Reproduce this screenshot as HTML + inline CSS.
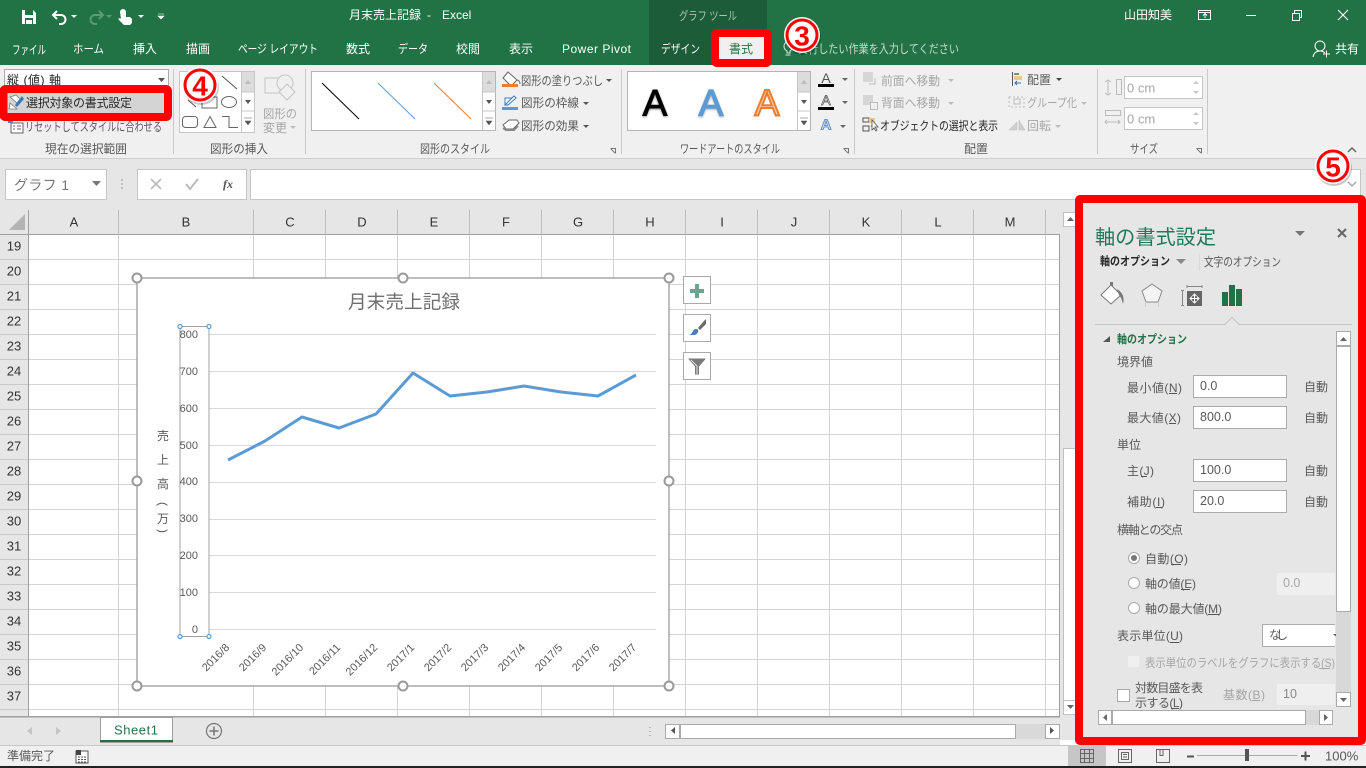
<!DOCTYPE html>
<html lang="ja"><head><meta charset="utf-8"><title>月末売上記録 - Excel</title>
<style>
html,body{margin:0;padding:0;width:1366px;height:768px;overflow:hidden;background:#fff}
svg{display:block}
text{font-family:"Liberation Sans","Noto Sans CJK JP",sans-serif;font-size:12px;dominant-baseline:central;fill:#444}
.w{fill:#fff}.g{fill:#a6a6a6}.t{fill:#595959}.d{fill:#262626}.h{fill:#217346}
.c{text-anchor:middle}
.n{font-size:13px;fill:#333}
.ic{fill:none;stroke:#666;stroke-width:1}
</style></head><body>
<svg width="1366" height="768" viewBox="0 0 1366 768" xmlns="http://www.w3.org/2000/svg">
<!-- title bar -->
<rect width="1366" height="65" fill="#217346"/>
<rect x="649" width="118" height="65" fill="#1d5c39"/>
<path d="M22 10h11l3 3v11H22z" fill="#fff"/><rect x="25" y="10" width="8" height="5" fill="#217346"/><rect x="25" y="18" width="8" height="6" fill="#217346"/><rect x="26" y="20" width="6" height="4" fill="#fff"/>
<path d="M57 11l-4 4 4 4M54 15h7a4 4 0 0 1 0 9h-2" fill="none" stroke="#fff" stroke-width="2"/><path d="M71 15h6l-3 3z" fill="#fff"/>
<path d="M99 11l4 4-4 4M102 15h-7a4 4 0 0 0 0 9h2" fill="none" stroke="#5f9a78" stroke-width="2"/><path d="M106 15h6l-3 3z" fill="#5f9a78"/>
<path d="M120 12a3 3 0 0 1 6 0v5h4l2 2v4l-2 2h-6l-6-6 2-1 1 1z" fill="#fff"/><path d="M138 15h6l-3 3z" fill="#fff"/>
<path d="M158 14h6M158 16h6l-3 3z" fill="#fff" stroke="#fff" stroke-width=".6"/>
<text x="349" y="15" class="w">月末売上記録</text><text x="427" y="15" class="w">-</text><text x="442" y="15" class="w">Excel</text>
<text x="679" y="16" style="fill:#a7c4b3" textLength="58" lengthAdjust="spacingAndGlyphs">グラフ ツール</text>
<text x="1124" y="15" class="w" textLength="48">山田知美</text>
<rect x="1198.500" y="10.500" width="12" height="9" fill="none" stroke="#fff"/><path d="M1199 12.500h12M1205 18v-4M1203 15.500l2-2 2 2" fill="none" stroke="#fff"/>
<path d="M1246 15.500h10" stroke="#fff"/>
<path d="M1292.500 13.500h7v7h-7zM1294.500 13v-2.500h7v7H1300" fill="none" stroke="#fff"/>
<path d="M1338 10l10 10M1348 10l-10 10" stroke="#fff" stroke-width="1.100"/>
<text x="12" y="50" class="w" textLength="34" lengthAdjust="spacingAndGlyphs">ファイル</text>
<text x="73" y="49" class="w" textLength="31" lengthAdjust="spacingAndGlyphs">ホーム</text>
<text x="133" y="49" class="w" textLength="24">挿入</text>
<text x="186" y="49" class="w" textLength="24">描画</text>
<text x="238" y="49" class="w" textLength="80" lengthAdjust="spacingAndGlyphs">ページ レイアウト</text>
<text x="346" y="49" class="w" textLength="24">数式</text>
<text x="398" y="49" class="w" textLength="30" lengthAdjust="spacingAndGlyphs">データ</text>
<text x="456" y="49" class="w" textLength="24">校閲</text>
<text x="509" y="49" class="w" textLength="24">表示</text>
<text x="562" y="49" class="w" textLength="69">Power Pivot</text>
<text x="661" y="49" class="w" textLength="39" lengthAdjust="spacingAndGlyphs">デザイン</text>
<!-- tell me -->
<path d="M787 53v-2c-2-1-3-3-3-5a4.500 4.500 0 0 1 9 0c0 2-1 4-3 5v2zM785.500 55h5" fill="none" stroke="#d9e6de"/>
<text x="798" y="49" style="fill:#c9dbd0" textLength="161" lengthAdjust="spacingAndGlyphs">実行したい作業を入力してください</text>
<circle cx="1320" cy="46" r="5" fill="none" stroke="#fff"/><path d="M1313 57c1-5 4-6 7-6s4 1 5 2M1323 54h7M1326.500 50.500v7" fill="none" stroke="#fff"/>
<text x="1335" y="49" class="w" textLength="24">共有</text>
<!-- ribbon -->
<rect y="65" width="1366" height="93" fill="#f0f0f0"/>
<rect y="158" width="1366" height="52" fill="#e6e6e6"/><rect y="158" width="1366" height="1" fill="#cfcfcf"/>
<path d="M173.500 69v85M305.500 69v85M621.500 69v85M854.500 69v85M1097.500 69v85M1207.500 69v85" stroke="#c8c8c8"/>
<!-- current selection -->
<rect x="4.500" y="69.500" width="164" height="19" fill="#fff" stroke="#ababab"/>
<text x="7" y="80" class="d" textLength="54">縦 (値) 軸</text><path d="M158 78h7l-3.500 4z" fill="#555"/>
<path d="M11 123h12v10H11z" fill="#fff" stroke="#666"/><path d="M13 126h2M17 126h4M13 129h2M17 129h4" stroke="#666"/><path d="M8 120h5v3H8z" fill="#4a86c0"/>
<text x="25" y="127" class="t" textLength="137" lengthAdjust="spacingAndGlyphs">リセットしてスタイルに合わせる</text>
<text x="86" y="149" class="t c" textLength="82" lengthAdjust="spacingAndGlyphs">現在の選択範囲</text>
<!-- shape gallery -->
<rect x="179.500" y="71.500" width="75" height="61" fill="#fff" stroke="#c6c6c6"/>
<rect x="241" y="72" width="13" height="20" fill="#dcdcdc"/><path d="M241.500 72v60M241 92h14M241 111h14" stroke="#c6c6c6"/>
<path d="M245 84h6l-3-4z" fill="#bbb"/><path d="M245 100h6l-3 4z" fill="#555"/><path d="M244 118h8M245 121h6l-3 4z" fill="#555" stroke="#555" stroke-width=".5"/>
<path d="M222 76l15 13M188 100l8 7" stroke="#555" fill="none"/><rect x="202" y="97" width="15" height="11" fill="none" stroke="#666"/><ellipse cx="229" cy="102" rx="7.500" ry="5.500" fill="none" stroke="#666"/>
<rect x="182.500" y="116.500" width="15" height="11" rx="3" fill="none" stroke="#666"/><path d="M204 127.500l6-11 6 11z" fill="none" stroke="#666"/><path d="M222 116.500h7v11h9" fill="none" stroke="#666"/>
<path d="M265 78h15v15h-15z" fill="#f0f0f0" stroke="#c4c4c4"/><circle cx="285" cy="83" r="8" fill="#f0f0f0" stroke="#c4c4c4"/><path d="M279 92l8-8 8 8-8 8z" fill="#f0f0f0" stroke="#c4c4c4"/>
<text x="263" y="114" class="g" textLength="34" lengthAdjust="spacingAndGlyphs">図形の</text><text x="263" y="128" class="g" textLength="24">変更</text><path d="M290 126h6l-3 3z" fill="#bbb"/>
<text x="239" y="149" class="t c" textLength="58" lengthAdjust="spacingAndGlyphs">図形の挿入</text>
<!-- shape styles -->
<rect x="311.500" y="71.500" width="184" height="59" fill="#fff" stroke="#b5b5b5"/>
<rect x="482" y="72" width="13" height="20" fill="#dcdcdc"/><path d="M482.500 72v58M482 92h14M482 111h14" stroke="#c6c6c6"/>
<path d="M486 84h6l-3-4z" fill="#bbb"/><path d="M486 100h6l-3 4z" fill="#555"/><path d="M485 118h8M486 121h6l-3 4z" fill="#555" stroke="#555" stroke-width=".5"/>
<path d="M322 83l37 36" stroke="#000"/><path d="M378 83l37 36" stroke="#5b9bd5"/><path d="M434 83l37 36" stroke="#ed7d31"/>
<path d="M508 72l9 8-6 6-8-8zM517 80c2 0 3 2 3 4" fill="#fff" stroke="#666"/><rect x="502" y="84" width="16" height="3" fill="#ed7d31"/>
<rect x="502" y="107" width="16" height="3" fill="#5b9bd5"/><path d="M505 105v-7h7M505 105l9-9 2 2-8 7z" fill="#fff" stroke="#3c79b5"/>
<path d="M503 125l6-5h8l2 3-6 6h-7z" fill="#fff" stroke="#666"/><path d="M503 128l3 2h8l4-4" fill="none" stroke="#888" stroke-width="2"/>
<text x="521" y="81" class="t" textLength="82" lengthAdjust="spacingAndGlyphs">図形の塗りつぶし</text><path d="M606 79h6l-3 3z" fill="#555"/>
<text x="521" y="103" class="t" textLength="58" lengthAdjust="spacingAndGlyphs">図形の枠線</text><path d="M583 102h6l-3 3z" fill="#555"/>
<text x="521" y="126" class="t" textLength="58" lengthAdjust="spacingAndGlyphs">図形の効果</text><path d="M583 125h6l-3 3z" fill="#555"/>
<text x="455" y="149" class="t c" textLength="70" lengthAdjust="spacingAndGlyphs">図形のスタイル</text>
<path d="M610.500 148.500h5v5M611 149l4 4" fill="none" stroke="#777"/>
<!-- wordart -->
<rect x="627.500" y="71.500" width="183" height="59" fill="#fff" stroke="#b5b5b5"/>
<rect x="797" y="72" width="13" height="20" fill="#dcdcdc"/><path d="M797.500 72v58M797 92h14M797 111h14" stroke="#c6c6c6"/>
<path d="M801 84h6l-3-4z" fill="#bbb"/><path d="M801 100h6l-3 4z" fill="#555"/><path d="M800 118h8M801 121h6l-3 4z" fill="#555" stroke="#555" stroke-width=".5"/>
<text x="655" y="103" class="c" style="font-size:37px;fill:#000;stroke:#000;stroke-width:1;filter:drop-shadow(0 1px 1px #999)">A</text>
<text x="711" y="103" class="c" style="font-size:37px;fill:#5b9bd5;stroke:#5b9bd5;stroke-width:1.200;filter:drop-shadow(0 1px 1px #aaa)">A</text>
<text x="767" y="103" class="c" style="font-size:37px;fill:#f6c8a8;stroke:#ed7d31;stroke-width:2">A</text>
<text x="826" y="78" class="c" style="font-size:14px;fill:#555">A</text><rect x="818" y="84" width="16" height="3" fill="#000"/><path d="M842 78h6l-3 3z" fill="#666"/>
<text x="826" y="100" class="c" style="font-size:14px;fill:#fff;stroke:#555;stroke-width:.7">A</text><rect x="818" y="107" width="16" height="3" fill="#000"/><path d="M842 101h6l-3 3z" fill="#666"/>
<text x="826" y="125" class="c" style="font-size:15px;font-weight:bold;fill:#cfe0f0;stroke:#4a7fbd;stroke-width:.8">A</text><path d="M840 125h6l-3 3z" fill="#666"/>
<text x="730" y="149" class="t c" textLength="100" lengthAdjust="spacingAndGlyphs">ワードアートのスタイル</text>
<path d="M843.500 148.500h5v5M844 149l4 4" fill="none" stroke="#777"/>
<!-- arrange -->
<rect x="863" y="72" width="10" height="10" fill="#d6d6d6"/><path d="M875 78v6h-6" fill="none" stroke="#bbb"/>
<rect x="863" y="95" width="10" height="10" fill="#d6d6d6"/><rect x="870.500" y="102.500" width="7" height="7" fill="#f0f0f0" stroke="#bbb"/>
<path d="M863 118h6v4h-6zM863 126h6v5h-6zM871 126h3" fill="none" stroke="#555"/><rect x="869" y="118" width="6" height="5" fill="#f0c78a"/><path d="M872 120v10l2-2 2 3 1-1-2-3h3z" fill="#fff" stroke="#555" stroke-width=".8"/>
<text x="881" y="81" class="g" textLength="59" lengthAdjust="spacingAndGlyphs">前面へ移動</text><path d="M948 79h6l-3 3z" fill="#bbb"/>
<text x="881" y="103" class="g" textLength="59" lengthAdjust="spacingAndGlyphs">背面へ移動</text><path d="M948 102h6l-3 3z" fill="#bbb"/>
<text x="880" y="126" class="d" textLength="118" lengthAdjust="spacingAndGlyphs">オブジェクトの選択と表示</text>
<path d="M1012.500 72v14" stroke="#555"/><rect x="1014" y="76" width="8" height="4" fill="#f0c78a"/><rect x="1014" y="73" width="5" height="2" fill="#888"/><path d="M1021 83h-6M1017 81l-2 2 2 2" fill="none" stroke="#2f6fb0"/>
<text x="1027" y="80" class="t" textLength="24">配置</text><path d="M1056 78h6l-3 3z" fill="#444"/>
<path d="M1009 97h15v10h-15z" fill="none" stroke="#bbb" stroke-dasharray="2 2"/><rect x="1014" y="99" width="6" height="5" fill="none" stroke="#bbb"/>
<text x="1027" y="103" class="g" textLength="50" lengthAdjust="spacingAndGlyphs">グループ化</text><path d="M1081 102h6l-3 3z" fill="#bbb"/>
<path d="M1009 130l8-8v8zM1019 120l6 10h-6z" fill="#cfcfcf" stroke="#bbb" stroke-width=".5"/>
<text x="1027" y="126" class="g" textLength="24">回転</text><path d="M1055 125h6l-3 3z" fill="#bbb"/>
<text x="976" y="149" class="t c" textLength="24">配置</text>
<!-- size -->
<rect x="1124.500" y="76.500" width="78" height="22" fill="#fff" stroke="#c6c6c6"/><rect x="1124.500" y="107.500" width="78" height="22" fill="#fff" stroke="#c6c6c6"/>
<text x="1127" y="88" class="g" style="font-size:13px">0 cm</text><text x="1127" y="119" class="g" style="font-size:13px">0 cm</text>
<path d="M1193 84h6l-3-3zM1193 91h6l-3 3zM1193 115h6l-3-3zM1193 122h6l-3 3z" fill="#c6c6c6"/>
<rect x="1116.500" y="79.500" width="5" height="15" fill="none" stroke="#bbb"/><path d="M1108 81v13M1105 82l3-2 3 2M1105 93l3 2 3-2" fill="none" stroke="#bbb"/>
<rect x="1105.500" y="110.500" width="15" height="5" fill="none" stroke="#bbb"/><path d="M1105 122h15M1107 120l-2 2 2 2M1118 120l2 2-2 2" fill="none" stroke="#bbb"/>
<text x="1144" y="149" class="t c" textLength="28" lengthAdjust="spacingAndGlyphs">サイズ</text>
<path d="M1196.500 148.500h5v5M1197 149l4 4" fill="none" stroke="#777"/>
<path d="M1348 152l4-4 4 4" fill="none" stroke="#666" stroke-width="1.500"/>
<!-- formula bar -->
<rect x="5.500" y="169.500" width="101" height="30" fill="#fff" stroke="#c6c6c6"/>
<text x="14" y="185" class="g" style="font-size:14px;fill:#777" textLength="55">グラフ 1</text><path d="M92 181h9l-4.500 5z" fill="#777"/>
<path d="M122 179v2M122 183v2M122 187v2" stroke="#999"/>
<rect x="137.500" y="169.500" width="109" height="30" fill="#fff" stroke="#c6c6c6"/>
<path d="M151 179l10 10M161 179l-10 10" stroke="#bbb" stroke-width="1.600"/><path d="M186 184l4 5 8-10" fill="none" stroke="#bbb" stroke-width="2"/>
<text x="228" y="184" class="c" style="font:italic bold 12px 'Liberation Serif',serif;fill:#555">fx</text>
<rect x="250.500" y="169.500" width="1110" height="30" fill="#fff" stroke="#c6c6c6"/>
<path d="M1348 182l4 4 4-4" fill="none" stroke="#aaa" stroke-width="1.500"/>
<!-- sheet -->
<rect y="210" width="1060" height="25" fill="#e6e6e6"/><rect y="235" width="28" height="482" fill="#e6e6e6"/>
<path d="M9 230l16-16v16z" fill="#b4b4b4"/>
<g stroke="#d4d4d4">
<path d="M28 259.500h1032M28 284.500h1032M28 309.500h1032M28 334.500h1032M28 359.500h1032M28 384.500h1032M28 409.500h1032M28 434.500h1032M28 459.500h1032M28 484.500h1032M28 509.500h1032M28 534.500h1032M28 559.500h1032M28 584.500h1032M28 609.500h1032M28 634.500h1032M28 659.500h1032M28 684.500h1032M28 709.500h1032"/>
<path d="M118.500 235v482M253.500 235v482M325.500 235v482M397.500 235v482M469.500 235v482M541.500 235v482M613.500 235v482M685.500 235v482M757.500 235v482M829.500 235v482M901.500 235v482M973.500 235v482M1045.500 235v482"/>
</g>
<path d="M0 234.500h1060M28.500 210v507M1059.500 235v482" stroke="#9f9f9f"/>
<path d="M118.500 210v25M253.500 210v25M325.500 210v25M397.500 210v25M469.500 210v25M541.500 210v25M613.500 210v25M685.500 210v25M757.500 210v25M829.500 210v25M901.500 210v25M973.500 210v25M1045.500 210v25" stroke="#bdbdbd"/>
<path d="M0 259.500h28M0 284.500h28M0 309.500h28M0 334.500h28M0 359.500h28M0 384.500h28M0 409.500h28M0 434.500h28M0 459.500h28M0 484.500h28M0 509.500h28M0 534.500h28M0 559.500h28M0 584.500h28M0 609.500h28M0 634.500h28M0 659.500h28M0 684.500h28M0 709.500h28" stroke="#c9c9c9"/>
<g class="hd">
<text x="74" y="222" class="n c">A</text><text x="186" y="222" class="n c">B</text><text x="290" y="222" class="n c">C</text><text x="362" y="222" class="n c">D</text><text x="434" y="222" class="n c">E</text><text x="506" y="222" class="n c">F</text><text x="578" y="222" class="n c">G</text><text x="650" y="222" class="n c">H</text><text x="722" y="222" class="n c">I</text><text x="794" y="222" class="n c">J</text><text x="866" y="222" class="n c">K</text><text x="938" y="222" class="n c">L</text><text x="1010" y="222" class="n c">M</text>
<text x="14" y="246" class="n c">19</text><text x="14" y="271" class="n c">20</text><text x="14" y="296" class="n c">21</text><text x="14" y="321" class="n c">22</text><text x="14" y="346" class="n c">23</text><text x="14" y="371" class="n c">24</text><text x="14" y="396" class="n c">25</text><text x="14" y="421" class="n c">26</text><text x="14" y="446" class="n c">27</text><text x="14" y="471" class="n c">28</text><text x="14" y="496" class="n c">29</text><text x="14" y="521" class="n c">30</text><text x="14" y="546" class="n c">31</text><text x="14" y="571" class="n c">32</text><text x="14" y="596" class="n c">33</text><text x="14" y="621" class="n c">34</text><text x="14" y="646" class="n c">35</text><text x="14" y="671" class="n c">36</text><text x="14" y="696" class="n c">37</text>
</g>
<!-- chart -->
<rect x="137" y="278" width="532" height="408" fill="#fff" stroke="#9a9a9a" stroke-width="1.300"/>
<text x="404" y="302" class="c" style="font-size:18.600px;fill:#6e6e6e" textLength="112">月末売上記録</text>
<path d="M209 334.500h447M209 371.500h447M209 408.500h447M209 445.500h447M209 482.500h447M209 519.500h447M209 555.500h447M209 592.500h447M209 629.500h447" stroke="#d9d9d9"/>
<rect x="180" y="326.500" width="29" height="310" fill="none" stroke="#a0a0a0"/>
<g><text x="198" y="335" style="text-anchor:end;font-size:11px" class="t">800</text><text x="198" y="372" style="text-anchor:end;font-size:11px" class="t">700</text><text x="198" y="409" style="text-anchor:end;font-size:11px" class="t">600</text><text x="198" y="446" style="text-anchor:end;font-size:11px" class="t">500</text><text x="198" y="482" style="text-anchor:end;font-size:11px" class="t">400</text><text x="198" y="519" style="text-anchor:end;font-size:11px" class="t">300</text><text x="198" y="556" style="text-anchor:end;font-size:11px" class="t">200</text><text x="198" y="593" style="text-anchor:end;font-size:11px" class="t">100</text><text x="198" y="630" style="text-anchor:end;font-size:11px" class="t">0</text></g>
<g><text x="163" y="436" class="c t">売</text><text x="163" y="460" class="c t">上</text><text x="163" y="484" class="c t">高</text><text x="163" y="504" class="c t" transform="rotate(90 163 504)">(</text><text x="163" y="519" class="c t">万</text><text x="163" y="531" class="c t" transform="rotate(90 163 531)">)</text></g>
<polyline points="228,460 265,441 302,417 339,428 376,414 413,373 450,396 487,392 524,386 561,392 598,396 636,375" fill="none" stroke="#5b9bd5" stroke-width="3" stroke-linejoin="round"/>
<g>
<text transform="translate(228,646) rotate(-45)" class="t" style="text-anchor:end;font-size:11px">2016/8</text>
<text transform="translate(265,646) rotate(-45)" class="t" style="text-anchor:end;font-size:11px">2016/9</text>
<text transform="translate(302,646) rotate(-45)" class="t" style="text-anchor:end;font-size:11px">2016/10</text>
<text transform="translate(339,646) rotate(-45)" class="t" style="text-anchor:end;font-size:11px">2016/11</text>
<text transform="translate(376,646) rotate(-45)" class="t" style="text-anchor:end;font-size:11px">2016/12</text>
<text transform="translate(413,646) rotate(-45)" class="t" style="text-anchor:end;font-size:11px">2017/1</text>
<text transform="translate(450,646) rotate(-45)" class="t" style="text-anchor:end;font-size:11px">2017/2</text>
<text transform="translate(487,646) rotate(-45)" class="t" style="text-anchor:end;font-size:11px">2017/3</text>
<text transform="translate(524,646) rotate(-45)" class="t" style="text-anchor:end;font-size:11px">2017/4</text>
<text transform="translate(561,646) rotate(-45)" class="t" style="text-anchor:end;font-size:11px">2017/5</text>
<text transform="translate(598,646) rotate(-45)" class="t" style="text-anchor:end;font-size:11px">2017/6</text>
<text transform="translate(635,646) rotate(-45)" class="t" style="text-anchor:end;font-size:11px">2017/7</text>
</g>
<g fill="#fff" stroke="#5b9bd5" stroke-width="1.200"><circle cx="180" cy="326.500" r="2"/><circle cx="209" cy="326.500" r="2"/><circle cx="180" cy="636.500" r="2"/><circle cx="209" cy="636.500" r="2"/></g>
<g fill="#fff" stroke="#999" stroke-width="2"><circle cx="137" cy="278" r="4.500"/><circle cx="403" cy="278" r="4.500"/><circle cx="669" cy="278" r="4.500"/><circle cx="137" cy="481" r="4.500"/><circle cx="669" cy="481" r="4.500"/><circle cx="137" cy="686" r="4.500"/><circle cx="403" cy="686" r="4.500"/><circle cx="669" cy="686" r="4.500"/></g>
<g fill="#fff" stroke="#aaa"><rect x="683.500" y="276.500" width="27" height="27"/><rect x="683.500" y="314.500" width="27" height="27"/><rect x="683.500" y="352.500" width="27" height="27"/></g>
<path d="M695 284h4v5h5v4h-5v5h-4v-5h-5v-4h5z" fill="#68a78e"/>
<path d="M706 319v5l-6 6-2-2 5-6z" fill="#6b6b6b"/><path d="M688 335c3 0 4-2 5-4s4-3 5-1-1 4-3 5z" fill="#4a7ebb"/>
<path d="M688 358.500h18l-7 8v8h-4v-8z" fill="#7a7a7a"/><path d="M691 360l6 6v8" fill="none" stroke="#fff" stroke-width=".8"/>
<!-- sheet scroll & tabs -->
<rect x="1060" y="210" width="16" height="530" fill="#e6e6e6"/>
<rect x="1063.500" y="212.500" width="13" height="14" fill="#fff" stroke="#c0c0c0"/><path d="M1067 221h7l-3.500-4z" fill="#666"/>
<rect x="1063.500" y="448.500" width="13" height="252" fill="#fff" stroke="#c0c0c0"/>
<rect x="1063.500" y="700.500" width="13" height="14" fill="#fff" stroke="#c0c0c0"/><path d="M1067 705h7l-3.500 4z" fill="#666"/>
<rect y="717" width="1060" height="28" fill="#e6e6e6"/><rect y="716" width="1060" height="1.500" fill="#9f9f9f"/>
<path d="M32 727v8l-5-4zM56 727v8l5-4z" fill="#c4c4c4"/>
<rect x="100.500" y="717.500" width="72" height="25" fill="#fff" stroke="#9f9f9f"/><rect x="100" y="740" width="73" height="2" fill="#217346"/>
<text x="114" y="730" style="font-size:13px;fill:#217346" textLength="44">Sheet1</text>
<circle cx="214" cy="731" r="7.500" fill="none" stroke="#777" stroke-width="1.200"/><path d="M209.500 731h9M214 726.500v9" stroke="#777" stroke-width="1.500"/>
<path d="M650 727v1M650 731v1M650 735v1" stroke="#888"/>
<rect x="665.500" y="724.500" width="14" height="14" fill="#fff" stroke="#aaa"/><path d="M675 727v7l-4-3.500z" fill="#555"/>
<rect x="680.500" y="724.500" width="335" height="14" fill="#fff" stroke="#aaa"/><rect x="1016" y="724" width="29" height="15" fill="#d9d9d9"/>
<rect x="1045.500" y="724.500" width="14" height="14" fill="#fff" stroke="#aaa"/><path d="M1050 727v7l4-3.500z" fill="#555"/>
<!-- status bar -->
<rect y="745" width="1366" height="21" fill="#f0f0f0"/><rect y="745" width="1366" height="1" fill="#c8c8c8"/><rect y="766" width="1366" height="2" fill="#222"/>
<text x="7" y="756" class="t" textLength="48">準備完了</text>
<path d="M76 751h12v12H76z" fill="#fff" stroke="#555"/><rect x="76" y="750" width="5" height="5" fill="#444"/><path d="M78 757h8M78 759.500h8M78 762h8" stroke="#555" stroke-dasharray="2 1"/>
<rect x="1068" y="746" width="38" height="20" fill="#c6c6c6"/>
<path d="M1080.500 749.500h13v13h-13zM1084.500 749.500v13M1089.500 749.500v13M1080.500 753.500h13M1080.500 758.500h13" fill="none" stroke="#666"/>
<path d="M1118.500 749.500h13v13h-13z" fill="none" stroke="#666"/><path d="M1121.500 752.500h7v7h-7zM1123 754.500h4M1123 757h4" fill="none" stroke="#666"/>
<path d="M1156.500 749.500h13v13h-13zM1163 749.500v6h-3v-6" fill="none" stroke="#666"/>
<path d="M1187 756.500h7" stroke="#555" stroke-width="2"/><path d="M1197 755.500h100" stroke="#aaa"/><rect x="1245" y="749" width="4" height="12" fill="#555"/><path d="M1301 756h9M1305.500 751.500v9" stroke="#555" stroke-width="2"/>
<text x="1325" y="756" class="t" style="font-size:13px">100%</text>
<!-- panel -->
<rect x="1075" y="195" width="291" height="550" rx="5" fill="#f00"/>
<rect x="1083" y="203" width="275" height="534" fill="#e6e6e6"/>
<text x="1095" y="238" style="font-size:20px;fill:#1f7a5c" textLength="121" lengthAdjust="spacingAndGlyphs">軸の書式設定</text>
<path d="M1295 231h10l-5 5z" fill="#777"/><path d="M1338 229l8 8M1346 229l-8 8" stroke="#666" stroke-width="2"/>
<text x="1100" y="262" class="d" style="font-weight:bold;font-size:11.500px" textLength="70" lengthAdjust="spacingAndGlyphs">軸のオプション</text><path d="M1176 259h10l-5 5z" fill="#888"/>
<path d="M1199.500 254v17" stroke="#dadada"/><text x="1204" y="262" class="t" textLength="77" lengthAdjust="spacingAndGlyphs">文字のオプション</text>
<path d="M1101 295l10-10 10 10-10 9z" fill="#fff" stroke="#777"/><path d="M1110 285v-3h3v4M1117 289c5 3 8 8 6 15-1-4-2-7-4-9z" fill="#777"/>
<path d="M1152 284l10 7-4 11h-12l-4-11z" fill="#f4f4f4" stroke="#888"/><path d="M1146 302l-1 5M1158 302l1 5" stroke="#ccc"/>
<rect x="1187" y="291" width="15" height="15" fill="#666"/><path d="M1187 286.500h15M1182.500 291v15M1187 285v3M1202 285v3M1181 290.500h3M1181 305.500h3" stroke="#888"/><path d="M1190 298.500h9M1194.500 294v9M1192.500 296l2-2 2 2M1192.500 301l2 2 2-2M1192 296.500l-2 2 2 2M1197 296.500l2 2-2 2" fill="none" stroke="#fff"/>
<path d="M1222 292h6v14h-6zM1229 285h6v21h-6zM1236 289h6v17h-6z" fill="#217346"/>
<path d="M1095 324.500h130l7-7 7 7h113" fill="none" stroke="#c4c4c4"/>
<path d="M1103 342l7-6v6z" fill="#555"/>
<text x="1117" y="340" class="h" style="font-weight:bold;font-size:11.500px" textLength="70" lengthAdjust="spacingAndGlyphs">軸のオプション</text>
<text x="1117" y="362" class="t" textLength="36">境界値</text>
<text x="1127" y="388" class="t" textLength="55">最小値(N)</text>
<text x="1127" y="418" class="t" textLength="54">最大値(X)</text>
<text x="1117" y="445" class="t" textLength="24">単位</text>
<text x="1127" y="471" class="t" textLength="27">主(J)</text>
<text x="1127" y="502" class="t" textLength="38">補助(I)</text>
<path d="M1169 393.500h8M1169 423.500h7M1141 476.500h6M1156 507.500h6M1171 564.500h10M1181 589.500h9M1208 614.500h11M1170 642.500h9M1171 708.500h8" stroke="#555"/>
<path d="M1319 668.500h11M1252 700.500h8" stroke="#a6a6a6"/>
<g fill="#fff" stroke="#ababab"><rect x="1193.500" y="375.500" width="93" height="22"/><rect x="1193.500" y="406.500" width="93" height="22"/><rect x="1193.500" y="459.500" width="93" height="22"/><rect x="1193.500" y="490.500" width="93" height="22"/></g>
<text x="1200" y="386" class="t" style="font-size:12.500px">0.0</text><text x="1200" y="417" class="t" style="font-size:12.500px">800.0</text><text x="1200" y="470" class="t" style="font-size:12.500px">100.0</text><text x="1200" y="501" class="t" style="font-size:12.500px">20.0</text>
<text x="1304" y="387" class="t" textLength="24">自動</text><text x="1304" y="418" class="t" textLength="24">自動</text><text x="1304" y="471" class="t" textLength="24">自動</text><text x="1304" y="502" class="t" textLength="24">自動</text>
<text x="1117" y="530" class="t" textLength="66">横軸との交点</text>
<circle cx="1134" cy="558" r="5.500" fill="#fff" stroke="#aaa"/><circle cx="1134" cy="558" r="3" fill="#777"/><circle cx="1134" cy="583" r="5.500" fill="#fff" stroke="#aaa"/><circle cx="1134" cy="608" r="5.500" fill="#fff" stroke="#aaa"/>
<text x="1145" y="559" class="t" textLength="43">自動(O)</text>
<text x="1145" y="584" class="t" textLength="51">軸の値(E)</text>
<text x="1145" y="609" class="t" textLength="77">軸の最大値(M)</text>
<rect x="1277" y="573" width="58" height="22" fill="#efefef"/><text x="1283" y="583" class="g" style="font-size:12.500px">0.0</text>
<text x="1117" y="636" class="t" textLength="66">表示単位(U)</text>
<rect x="1262.500" y="624.500" width="73" height="22" fill="#fff" stroke="#ababab"/><rect x="1335" y="624" width="1" height="23" fill="#e6e6e6"/><text x="1269" y="635" class="t" textLength="19">なし</text><path d="M1333 634h3v2h-1z" fill="#666"/>
<rect x="1128" y="656" width="11" height="11" fill="#f0f0f0"/>
<text x="1145" y="663" class="g" textLength="190" lengthAdjust="spacingAndGlyphs">表示単位のラベルをグラフに表示する(S)</text>
<rect x="1117.500" y="689.500" width="12" height="12" fill="#fff" stroke="#aaa"/>
<text x="1135" y="688" class="t" textLength="68">対数目盛を表</text><text x="1135" y="703" class="t" textLength="48">示する(L)</text>
<text x="1223" y="695" class="g" textLength="42">基数(B)</text>
<rect x="1277" y="684" width="58" height="21" fill="#efefef"/><text x="1283" y="694" class="g" style="font-size:12.500px;fill:#8a8a8a">10</text>
<!-- panel scrollbars -->
<rect x="1336" y="331" width="15" height="376" fill="#d8d8d8"/>
<rect x="1336.500" y="331.500" width="14" height="14" fill="#fff" stroke="#aaa"/><path d="M1340 341h7l-3.500-4z" fill="#666"/>
<rect x="1336.500" y="346.500" width="14" height="265" fill="#fff" stroke="#aaa"/>
<rect x="1336.500" y="692.500" width="14" height="14" fill="#fff" stroke="#aaa"/><path d="M1340 698h7l-3.500 4z" fill="#666"/>
<rect x="1098" y="710" width="235" height="15" fill="#d8d8d8"/>
<rect x="1098.500" y="710.500" width="13" height="14" fill="#fff" stroke="#aaa"/><path d="M1107 714v7l-4-3.500z" fill="#666"/>
<rect x="1112.500" y="710.500" width="193" height="14" fill="#fff" stroke="#aaa"/>
<rect x="1319.500" y="710.500" width="13" height="14" fill="#fff" stroke="#aaa"/><path d="M1324 714v7l4-3.500z" fill="#666"/>
<!-- annotation boxes -->
<rect x="715" y="33" width="53" height="30" rx="2" fill="#f0f0f0" stroke="#f00" stroke-width="8"/>
<text x="741" y="49" class="c" style="fill:#217346" textLength="24">書式</text>
<rect x="3.500" y="89" width="164.500" height="28" rx="2" fill="#d4d4d4" stroke="#f00" stroke-width="8"/>
<path d="M10 97l6-2 4 4-3 4zM10 103l7 6-8 0z" fill="#fff" stroke="#777" stroke-width=".8"/><path d="M22 96l-7 9 2 2 7-8z" fill="#3c79b5"/>
<text x="26" y="103" class="d" textLength="106">選択対象の書式設定</text>
<!-- callouts -->
<g><circle cx="803" cy="37" r="18" fill="#000" opacity=".22"/><circle cx="802" cy="35" r="18" fill="#fff"/><circle cx="802" cy="35" r="15" fill="#fff" stroke="#f00" stroke-width="3"/><text x="802" y="36" class="c" style="font-size:28px;font-weight:bold;fill:#f00">3</text></g>
<g><circle cx="201" cy="87" r="18" fill="#000" opacity=".22"/><circle cx="200" cy="85" r="18" fill="#fff"/><circle cx="200" cy="85" r="15" fill="#fff" stroke="#f00" stroke-width="3"/><text x="200" y="86" class="c" style="font-size:28px;font-weight:bold;fill:#f00">4</text></g>
<g><circle cx="1334" cy="168" r="18" fill="#000" opacity=".22"/><circle cx="1333" cy="166" r="18" fill="#fff"/><circle cx="1333" cy="166" r="15" fill="#fff" stroke="#f00" stroke-width="3"/><text x="1333" y="167" class="c" style="font-size:28px;font-weight:bold;fill:#f00">5</text></g>
</svg>
</body></html>
